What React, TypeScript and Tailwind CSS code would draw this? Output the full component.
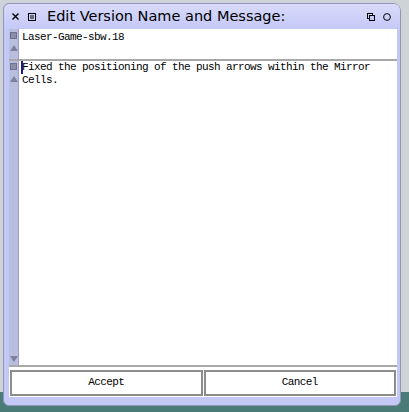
import React from "react";

const mono = { fontFamily: '"Liberation Mono", "DejaVu Sans Mono", monospace' };

function ScrollSquare() {
  return <div className="w-[7px] h-[7px] bg-[#8a8ea8] border border-[#6e7290]" />;
}

function UpArrow() {
  return (
    <svg width="8" height="6" viewBox="0 0 8 6">
      <path d="M4 0 L8 6 L0 6 Z" fill="#7c809c" />
    </svg>
  );
}

function DownArrow() {
  return (
    <svg width="8" height="6" viewBox="0 0 8 6">
      <path d="M0 0 L8 0 L4 6 Z" fill="#7c809c" />
    </svg>
  );
}

export default function App() {
  return (
    <div className="relative w-[409px] h-[412px] bg-[#cdd3d6] overflow-hidden">
      {/* desktop teal at bottom */}
      <div className="absolute left-0 right-0 bottom-0 h-[20px] bg-[#4b7b77]" />

      {/* window */}
      <div className="absolute left-[3px] top-[3px] w-[398px] h-[403px] flex flex-col bg-[#c4c8f6] border border-[#9296b4] rounded-tl-[6px] rounded-tr-[8px] rounded-b-[6px]">
        {/* title bar */}
        <div
          className="h-[25px] flex items-center text-black bg-gradient-to-b from-[#d8dbfb] to-[#c4c8f6] rounded-t-[6px]"
          style={{ fontFamily: '"DejaVu Sans", sans-serif' }}
        >
          <svg className="ml-[8px]" width="7" height="7" viewBox="0 0 7 7">
            <path d="M0.5 0.5 L6.5 6.5 M6.5 0.5 L0.5 6.5" stroke="#000" strokeWidth="1.4" />
          </svg>
          <svg className="ml-[9px]" width="8" height="8" viewBox="0 0 8 8">
            <rect x="0.5" y="0.5" width="7" height="7" fill="none" stroke="#000" />
            <line x1="2" y1="3" x2="6" y2="3" stroke="#000" />
            <line x1="2" y1="5" x2="6" y2="5" stroke="#000" />
          </svg>
          <span className="ml-[11px] text-[14.5px] leading-none">Edit Version Name and Message:</span>
          <div className="flex-1" />
          <svg width="8" height="8" viewBox="0 0 8 8">
            <rect x="0.5" y="0.5" width="5" height="5" fill="none" stroke="#000" />
            <rect x="2.5" y="2.5" width="5" height="5" fill="#c4c8f6" stroke="#000" />
          </svg>
          <svg className="ml-[8px] mr-[9px]" width="8" height="8" viewBox="0 0 8 8">
            <circle cx="4" cy="4" r="3.4" fill="none" stroke="#000" />
          </svg>
        </div>

        {/* body */}
        <div className="flex-1 flex flex-col ml-[5px] mr-[3px] mb-[8px] bg-white">
          {/* name pane */}
          <div className="flex h-[32px] border-b-2 border-[#a8a8a8]">
            <div className="w-[10px] bg-[#b9bde0] border-r border-[#9ca0c0] flex flex-col items-center pt-[3px] gap-[6px]">
              <ScrollSquare />
              <UpArrow />
            </div>
            <div
              className="flex-1 pl-[3px] pt-[2px] text-[11px] leading-[13px] tracking-[-0.6px] text-black"
              style={mono}
            >
              Laser-Game-sbw.18
            </div>
          </div>

          {/* message pane */}
          <div className="flex flex-1 border-b-2 border-[#a8a8a8]">
            <div className="w-[10px] bg-[#b9bde0] border-r border-[#9ca0c0] flex flex-col items-center pt-[2px] gap-[6px]">
              <ScrollSquare />
              <UpArrow />
              <div className="flex-1" />
              <div className="mb-[3px]">
                <DownArrow />
              </div>
            </div>
            <div
              className="flex-1 pl-[3px] pt-[0px] text-[11px] leading-[13px] tracking-[-0.6px] text-black"
              style={mono}
            >
              <div className="relative">
                <span className="absolute left-[-1px] top-[0px] w-[2px] h-[13px] bg-[#1a1a8c]" />
                Fixed the positioning of the push arrows within the Mirror
              </div>
              <div>Cells.</div>
            </div>
          </div>

          {/* buttons */}
          <div className="h-[30px] flex items-center gap-[1px] px-[1px] pt-[1px]">
            <button
              className="flex-1 h-[26px] bg-white border-2 border-[#8c8c8c] text-[11px] tracking-[-0.6px] text-black"
              style={mono}
            >
              Accept
            </button>
            <button
              className="flex-1 h-[26px] bg-white border-2 border-[#8c8c8c] text-[11px] tracking-[-0.6px] text-black"
              style={mono}
            >
              Cancel
            </button>
          </div>
        </div>
      </div>
    </div>
  );
}
